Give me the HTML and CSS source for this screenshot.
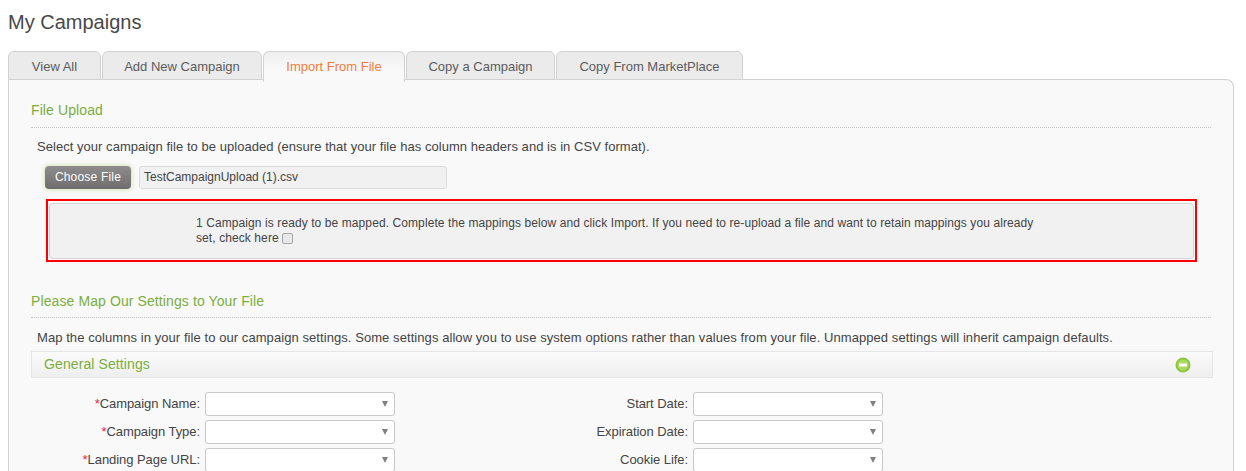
FILE: index.html
```html
<!DOCTYPE html>
<html lang="en">
<head>
<meta charset="utf-8">
<title>My Campaigns</title>
<link rel="stylesheet" href="styles.css">
</head>
<body>
<h1 class="page-title">My Campaigns</h1>
<nav class="tabs">
  <a class="tab">View All</a>
  <a class="tab">Add New Campaign</a>
  <a class="tab active">Import From File</a>
  <a class="tab">Copy a Campaign</a>
  <a class="tab">Copy From MarketPlace</a>
</nav>
<main class="panel">
  <h2 class="section-title">File Upload</h2>
  <p class="intro">Select your campaign file to be uploaded (ensure that your file has column headers and is in CSV format).</p>
  <div class="upload">
    <button class="choose" type="button">Choose File</button>
    <div class="filename">TestCampaignUpload (1).csv</div>
  </div>
  <div class="highlight">
    <div class="notice">
      <p class="notice-text">1 Campaign is ready to be mapped. Complete the mappings below and click Import. If you need to re-upload a file and want to retain mappings you already set, check here <span class="check"></span></p>
    </div>
  </div>
  <h2 class="section-title second">Please Map Our Settings to Your File</h2>
  <p class="intro map">Map the columns in your file to our campaign settings. Some settings allow you to use system options rather than values from your file. Unmapped settings will inherit campaign defaults.</p>
  <div class="group-bar">
    <span class="group-name">General Settings</span>
    <svg class="collapse" width="16" height="16" viewBox="0 0 16 16" aria-hidden="true">
      <circle cx="8" cy="8" r="7.5" fill="#8cc63f"/>
      <circle cx="8" cy="8" r="5.5" fill="#add95f"/>
      <rect x="4" y="6.5" width="8" height="3" fill="#fff"/>
    </svg>
  </div>
  <div class="form">
    <label class="field-label"><em>*</em>Campaign Name:</label><div class="select"></div>
    <label class="field-label">Start Date:</label><div class="select"></div>
    <label class="field-label"><em>*</em>Campaign Type:</label><div class="select"></div>
    <label class="field-label">Expiration Date:</label><div class="select"></div>
    <label class="field-label"><em>*</em>Landing Page URL:</label><div class="select"></div>
    <label class="field-label">Cookie Life:</label><div class="select"></div>
  </div>
</main>
</body>
</html>
```
FILE: styles.css
```css
* { box-sizing: border-box; }
html, body { height: 471px; overflow: hidden; }
body {
  margin: 0;
  padding: 0 12px 0 8px;
  background: #fff;
  color: #444;
  font-family: "Liberation Sans", Arial, sans-serif;
  font-size: 12px;
}
.page-title {
  margin: 0;
  padding-top: 11px;
  height: 51px;
  font-size: 20px;
  line-height: 22px;
  font-weight: normal;
  color: #484848;
}
.tabs {
  display: grid;
  grid-template-columns: 93px 160px 142px 149px 187px;
  gap: 1px;
  height: 28px;
  position: relative;
  z-index: 1;
}
.tab {
  height: 29px;
  border: 1px solid #d2d2d2;
  border-radius: 6px 6px 0 0;
  background: #ebebeb;
  color: #5c5c5c;
  font-size: 13px;
  line-height: 29px;
  text-align: center;
}
.tab.active {
  height: 31px;
  border-bottom: 0;
  background: linear-gradient(#efefef, #f9f9f9 60%);
  color: #f47b3a;
}
.panel {
  height: 392px;
  overflow: hidden;
  padding: 0 22px;
  border: 1px solid #d2d2d2;
  border-bottom: 0;
  border-radius: 0 8px 0 0;
  background: #f9f9f9;
}
.section-title {
  margin: 21px 0 0;
  padding-bottom: 8px;
  height: 27px;
  border-bottom: 1px dotted #c4c4c4;
  font-size: 14px;
  letter-spacing: .1px;
  line-height: 18px;
  font-weight: normal;
  color: #7cad3f;
}
.section-title.second { margin-top: 30px; height: 26px; }
.intro {
  margin: 10px 0 0 6px;
  font-size: 13px;
  letter-spacing: .04px;
  line-height: 17px;
  color: #444;
  white-space: nowrap;
}
.intro.map { margin-top: 11px; letter-spacing: .07px; }
.upload {
  display: flex;
  gap: 8px;
  margin: 11px 0 0 14px;
}
.choose {
  width: 86px;
  height: 23px;
  padding: 0;
  border: 0;
  border-radius: 4px;
  background: linear-gradient(#8e8c8c, #6e6c6c);
  box-shadow: 0 0 4px 1px #d8e6b4;
  color: #fff;
  font: 12px/21px "Liberation Sans", Arial, sans-serif;
  letter-spacing: .2px;
}
.filename {
  width: 308px;
  height: 23px;
  padding: 0 4px;
  border: 1px solid #dcdcdc;
  border-radius: 3px;
  background: #f1f1f1;
  line-height: 21px;
}
.highlight {
  width: 1151px;
  height: 63px;
  margin: 10px 0 0 15px;
  padding: 2px 1px 1px;
  border: 2px solid #f00;
}
.notice {
  height: 56px;
  padding: 12px 0 0 146px;
  border: 1px solid #d4d4d4;
  border-radius: 4px;
  background: #f1f1f1;
}
.notice-text {
  width: 846px;
  margin: 0;
  line-height: 15px;
  letter-spacing: .09px;
}
.check {
  display: inline-block;
  width: 11px;
  height: 11px;
  vertical-align: -2px;
  border: 1px solid #a6a6a6;
  border-radius: 2px;
  background: #e8e8e8;
}
.group-bar {
  display: flex;
  align-items: center;
  justify-content: space-between;
  width: 1182px;
  height: 27px;
  margin-top: 5px;
  padding: 0 21px 0 12px;
  border: 1px solid #e6e6e6;
  background: linear-gradient(#fbfbfb, #eeeeee);
  font-size: 14px;
  letter-spacing: .1px;
  color: #7cad3f;
}
.group-name { padding-bottom: 2px; }
.form {
  display: grid;
  grid-template-columns: 169px 190px 288px 190px;
  grid-auto-rows: 24px;
  gap: 4px 5px;
  margin-top: 14px;
}
.field-label {
  font-size: 13px;
  letter-spacing: -.06px;
  text-align: right;
  line-height: 23px;
}
.field-label em { color: #e8204a; font-style: normal; }
.select {
  position: relative;
  border: 1px solid #c8c8c8;
  border-radius: 3px;
  background: #fff;
}
.select::after {
  content: "";
  position: absolute;
  top: 8px;
  right: 6px;
  border-style: solid;
  border-width: 6px 3px 0;
  border-color: #808080 transparent transparent;
}
```
